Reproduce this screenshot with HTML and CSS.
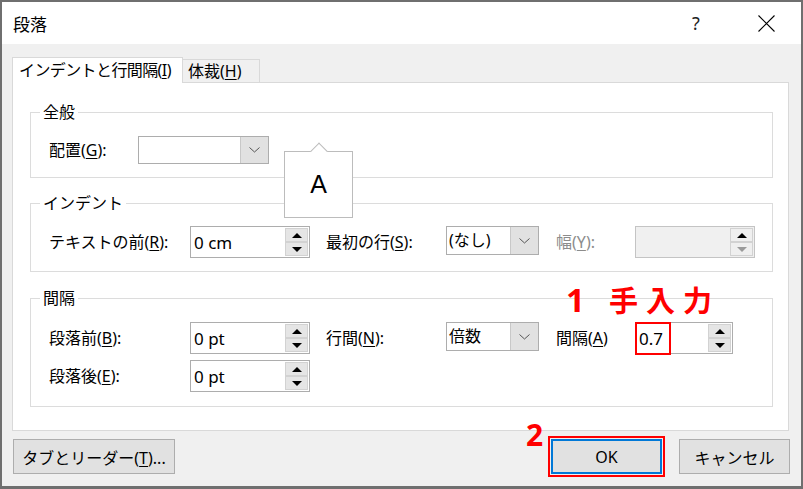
FILE: index.html
```html
<!DOCTYPE html>
<html lang="ja">
<head>
    <meta charset="UTF-8">
    <meta name="viewport" content="width=device-width, initial-scale=1.0">
    <title>段落</title>
    <link rel="stylesheet" href="styles.css">
</head>

<body>
    <div class="window">
        <div class="titlebar">
            <span class="title">段落</span>
            <span class="help">?</span>
            <span class="close">
                <svg width="17" height="17" viewBox="0 0 17 17">
                    <path d="M0.5 0.5L16.5 16.5M16.5 0.5L0.5 16.5" stroke="#000" stroke-width="1.1" fill="none"/>
                </svg>
            </span>
        </div>

        <div class="client">
            <div class="tabs">
                <div class="tab tab--active">インデントと行間隔(<u>I</u>)</div>
                <div class="tab tab--second">体裁(<u>H</u>)</div>
            </div>

            <div class="panel">
                <fieldset class="group group--general">
                    <legend>全般</legend>
                    <div class="row">
                        <label class="lbl lbl--align">配置(<u>G</u>):</label>
                        <div class="combo combo--align">
                            <span class="combo-text"></span>
                            <span class="combo-btn"><svg width="11" height="6" viewBox="0 0 11 6"><polyline points="0.5,0.5 5.5,5 10.5,0.5" fill="none" stroke="#555" stroke-width="1"/></svg></span>
                        </div>
                    </div>
                </fieldset>

                <fieldset class="group group--indent">
                    <legend>インデント</legend>
                    <div class="row">
                        <label class="lbl lbl--first">テキストの前(<u>R</u>):</label>
                        <div class="spin">
                            <span class="spin-text">0 cm</span>
                            <span class="spin-btns"><span class="spin-up"></span><span class="spin-down"></span></span>
                        </div>
                        <label class="lbl lbl--mid">最初の行(<u>S</u>):</label>
                        <div class="combo combo--small">
                            <span class="combo-text">(なし)</span>
                            <span class="combo-btn"><svg width="11" height="6" viewBox="0 0 11 6"><polyline points="0.5,0.5 5.5,5 10.5,0.5" fill="none" stroke="#555" stroke-width="1"/></svg></span>
                        </div>
                        <label class="lbl lbl--last lbl--disabled">幅(<u>Y</u>):</label>
                        <div class="spin spin--disabled">
                            <span class="spin-text"></span>
                            <span class="spin-btns"><span class="spin-up"></span><span class="spin-down"></span></span>
                        </div>
                    </div>
                </fieldset>

                <fieldset class="group group--spacing">
                    <legend>間隔</legend>
                    <div class="row">
                        <label class="lbl lbl--first">段落前(<u>B</u>):</label>
                        <div class="spin">
                            <span class="spin-text">0 pt</span>
                            <span class="spin-btns"><span class="spin-up"></span><span class="spin-down"></span></span>
                        </div>
                        <label class="lbl lbl--mid">行間(<u>N</u>):</label>
                        <div class="combo combo--small">
                            <span class="combo-text">倍数</span>
                            <span class="combo-btn"><svg width="11" height="6" viewBox="0 0 11 6"><polyline points="0.5,0.5 5.5,5 10.5,0.5" fill="none" stroke="#555" stroke-width="1"/></svg></span>
                        </div>
                        <label class="lbl lbl--last">間隔(<u>A</u>)</label>
                        <div class="spin spin--narrow">
                            <span class="spin-text"><span class="mark">0.7</span></span>
                            <span class="spin-btns"><span class="spin-up"></span><span class="spin-down"></span></span>
                        </div>
                    </div>
                    <div class="row row--second">
                        <label class="lbl lbl--first">段落後(<u>E</u>):</label>
                        <div class="spin">
                            <span class="spin-text">0 pt</span>
                            <span class="spin-btns"><span class="spin-up"></span><span class="spin-down"></span></span>
                        </div>
                    </div>
                </fieldset>
            </div>

            <div class="footer">
                <button class="btn btn--tabs">タブとリーダー(<u>T</u>)...</button>
                <button class="btn btn--ok">OK</button>
                <button class="btn btn--cancel">キャンセル</button>
            </div>
        </div>

        <!-- overlays -->
        <div class="tooltip">A</div>
        <div class="note note--1"><span class="note-num">1</span><span class="note-text">手入力</span></div>
        <div class="note note--2"><span class="note-num">2</span></div>
    </div>
</body>
</html>
```

FILE: styles.css
```css
body {
    margin: 0;
    font-family: "Noto Sans", "Noto Sans CJK JP", sans-serif;
    font-size: 16px;
    color: #000;
}
.window {
    position: relative;
    width: 803px;
    height: 489px;
    box-sizing: border-box;
    border: 2px solid #6f6f6f;
    border-bottom-width: 3px;
    background-color: #f0f0f0;
    display: flex;
    flex-direction: column;
}
u {
    text-underline-offset: 2px;
}

/* title bar */
.titlebar {
    height: 42px;
    flex: none;
    background-color: #fff;
    display: flex;
    align-items: center;
    padding: 0 12px 0 11px;
}
.title {
    flex: 1;
    font-size: 17px;
}
.help {
    width: 46px;
    margin-right: 24px;
    text-align: center;
    font-size: 18px;
    color: #222;
}
.close {
    width: 46px;
    height: 17px;
    display: flex;
    justify-content: center;
}

/* tabs + panel */
.client {
    flex: 1;
    padding: 13px 12px 0 10px;
    display: flex;
    flex-direction: column;
}
.tabs {
    height: 25px;
    display: flex;
    align-items: flex-end;
}
.tab {
    box-sizing: border-box;
    height: 23px;
    border: 1px solid #d9d9d9;
    border-bottom: none;
    line-height: 22px;
    white-space: nowrap;
}
.tab--active {
    position: relative;
    z-index: 1;
    width: 171px;
    height: 26px;
    margin-bottom: -1px;
    padding-left: 6px;
    line-height: 25px;
    letter-spacing: -0.6px;
    background-color: #fff;
}
.tab--second {
    width: 77px;
    border-left: none;
    padding-left: 5px;
    background-color: #f0f0f0;
}
.panel {
    box-sizing: border-box;
    width: 777px;
    height: 349px;
    border: 1px solid #d9d9d9;
    background-color: #fff;
    padding: 19px 15px 0 17px;
}

/* group boxes */
.group {
    margin: 0;
    min-width: 0;
    border: 1px solid #dcdcdc;
    padding: 14px 0 13px 18px;
}
.group legend {
    margin-left: -9px;
    padding: 0 3px;
    line-height: 20px;
}
.group--indent {
    margin-top: 15px;
    padding-top: 13px;
}
.group--spacing {
    margin-top: 16px;
    padding-bottom: 14px;
}
.row {
    display: flex;
    align-items: flex-start;
    height: 32px;
}
.group--general .row {
    height: 28px;
}
.row--second {
    margin-top: 6px;
}
.lbl {
    flex: none;
    line-height: 32px;
    white-space: nowrap;
}
.group--general .lbl {
    line-height: 28px;
}
.lbl--align { width: 89px; }
.lbl--first { width: 141px; }
.lbl--mid { width: 120px; margin-left: 16px; }
.lbl--last { width: 79px; margin-left: 17px; }
.lbl--disabled { color: #8c8c8c; }

/* combo boxes */
.combo {
    box-sizing: border-box;
    height: 29px;
    border: 1px solid #adadad;
    background-color: #fff;
    display: flex;
}
.combo--align { width: 131px; height: 28px; }
.combo--small { width: 93px; }
.combo-text {
    flex: 1;
    padding-left: 2px;
    line-height: 26px;
}
.combo-btn {
    width: 27px;
    background-color: #e1e1e1;
    border-left: 1px solid #c8c8c8;
    display: flex;
    align-items: center;
    justify-content: center;
}

/* spin boxes */
.spin {
    box-sizing: border-box;
    width: 120px;
    height: 32px;
    border: 1px solid #adadad;
    background-color: #fff;
    display: flex;
    padding: 1px 1px 1px 0;
}
.spin--narrow { width: 98px; }
.spin--disabled {
    border-color: #c4c4c4;
    background-color: #f0f0f0;
}
.spin-text {
    flex: 1;
    padding-left: 3px;
    line-height: 29px;
    font-size: 17px;
}
.spin-btns {
    width: 23px;
    display: flex;
    flex-direction: column;
}
.spin-up,
.spin-down {
    flex: 1;
    box-sizing: border-box;
    border: 1px solid #d2d2d2;
    background-color: #e5e5e5;
    display: flex;
    align-items: center;
    justify-content: center;
}
.spin-up::after,
.spin-down::after {
    content: "";
    border-left: 5px solid transparent;
    border-right: 5px solid transparent;
}
.spin-up::after { border-bottom: 5px solid #000; }
.spin-down::after { border-top: 5px solid #000; }
.spin--disabled .spin-up,
.spin--disabled .spin-down {
    background-color: #efefef;
}
.spin--disabled .spin-down::after { border-top-color: #9a9a9a; }
.mark {
    display: inline-block;
    vertical-align: top;
    margin-left: -2px;
    padding: 0 6px 0 2px;
    line-height: 29px;
    outline: 2px solid #ff0000;
}

/* buttons */
.footer {
    display: flex;
    margin-top: 8px;
    margin-right: -1px;
    padding-left: 1px;
}
.btn {
    box-sizing: border-box;
    height: 35px;
    border: 1px solid #adadad;
    background-color: #e1e1e1;
    font-family: inherit;
    font-size: 16px;
    color: #000;
    padding: 0;
}
.btn--tabs { width: 162px; margin-right: auto; }
.btn--ok {
    width: 111px;
    border: 2px solid #0078d7;
    outline: 2px solid #ff0000;
    outline-offset: 1px;
}
.btn--cancel { width: 111px; margin-left: 17px; }

/* overlays */
.tooltip {
    position: absolute;
    left: 282px;
    top: 149px;
    width: 69px;
    height: 67px;
    box-sizing: border-box;
    border: 1px solid #bcbcbc;
    background-color: #fff;
    font-family: "Liberation Sans", sans-serif;
    font-size: 25px;
    line-height: 65px;
    text-align: center;
}
.tooltip::before {
    content: "";
    position: absolute;
    left: 28px;
    top: -7px;
    width: 11px;
    height: 11px;
    background-color: #fff;
    border-top: 1px solid #bcbcbc;
    border-left: 1px solid #bcbcbc;
    transform: rotate(45deg);
}
.note {
    position: absolute;
    display: flex;
    align-items: baseline;
    color: #ff0000;
    font-family: "Noto Sans", "Noto Sans CJK JP", sans-serif;
    font-weight: 700;
    line-height: 1;
}
.note--1 {
    left: 564px;
    top: 281px;
}
.note--1 .note-num { font-size: 33px; }
.note--1 .note-text {
    margin-left: 24px;
    font-size: 29px;
    letter-spacing: 8px;
}
.note--2 {
    left: 524px;
    top: 418px;
    font-size: 30px;
}
```
